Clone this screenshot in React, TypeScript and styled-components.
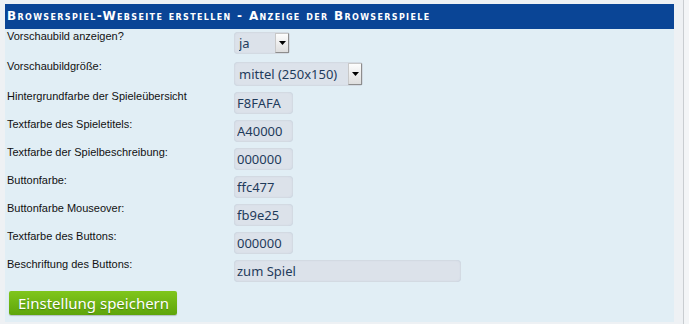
import React from "react";
import styled, { createGlobalStyle } from "styled-components";

const Global = createGlobalStyle`
  html, body { margin: 0; padding: 0; }
  body { background: #f3f5f7; font-family: "Liberation Sans", Arial, sans-serif; }
`;

const Frame = styled.div`
  width: 684px;
  height: 324px;
  box-sizing: border-box;
  padding: 4px 10px 2px 5px;
  background: #eef1f4;
  border-right: 1px solid #c9cdd1;
`;

const Panel = styled.div`
  background: #e1eef5;
  width: 669px;
  height: 318px;
  display: flex;
  flex-direction: column;
`;

const Header = styled.div`
  height: 25px;
  background: #0a4596;
  color: #fff;
  font-family: "DejaVu Sans", Verdana, sans-serif;
  font-weight: bold;
  font-variant: small-caps;
  font-size: 12px;
  line-height: 25px;
  padding-left: 2px;
  letter-spacing: 1.35px;
  white-space: nowrap;
`;

const Form = styled.form`
  display: flex;
  flex-direction: column;
  padding: 1px 0 0 2px;
  margin: 0;
`;

const Row = styled.div<{ $h: number }>`
  display: grid;
  grid-template-columns: 227px 1fr;
  height: ${(p) => p.$h}px;
  align-items: start;
`;

const Label = styled.label`
  font-family: "Liberation Sans", Arial, sans-serif;
  font-size: 11px;
  line-height: 13px;
  color: #111;
`;

const Field = styled.input<{ $w: number }>`
  margin-top: 2px;
  width: ${(p) => p.$w}px;
  height: 22px;
  box-sizing: border-box;
  border: none;
  border-radius: 4px;
  background: #dce2ea;
  box-shadow: inset 0 0 2px rgba(120, 140, 160, 0.35);
  font-family: "Noto Sans", "Open Sans", sans-serif;
  font-size: 13px;
  color: #1f3b5b;
  padding: 0 0 0 3px;
  outline: none;
`;

const SelectWrap = styled.div<{ $h: number }>`
  margin-top: 2px;
  display: inline-flex;
  align-items: center;
  height: ${(p) => p.$h}px;
  background: #dce2ea;
  border-radius: 4px;
  box-shadow: inset 0 0 2px rgba(120, 140, 160, 0.35);
  justify-self: start;
  padding-right: 1px;
`;

const Select = styled.select<{ $w: number }>`
  appearance: none;
  -webkit-appearance: none;
  border: none;
  background: transparent;
  width: ${(p) => p.$w}px;
  font-family: "Noto Sans", "Open Sans", sans-serif;
  font-size: 13px;
  color: #1f3b5b;
  padding: 0 0 0 5px;
  outline: none;
  height: 100%;
`;

const ArrowBox = styled.span<{ $h: number }>`
  width: 14px;
  height: ${(p) => p.$h}px;
  box-sizing: border-box;
  border: 1px solid #8d8d8d;
  border-left-color: #c8c8c8;
  border-top-color: #c8c8c8;
  background: linear-gradient(#fdfdfd, #dedede);
  display: flex;
  align-items: center;
  justify-content: center;
`;

const SaveButton = styled.button`
  margin: 5px 0 0 2px;
  align-self: flex-start;
  height: 24px;
  padding: 0 8px 0 9px;
  border: none;
  border-radius: 2px;
  background: linear-gradient(#80c61c, #5ea50b);
  color: #fff;
  font-family: "Noto Sans", "Open Sans", sans-serif;
  font-size: 15px;
  line-height: 24px;
  text-shadow: 0 1px 1px rgba(40, 80, 0, 0.45);
  box-shadow: 0 1px 1px rgba(0, 0, 0, 0.2);
  cursor: pointer;
`;

const Arrow = ({ h }: { h: number }) => (
  <ArrowBox $h={h}>
    <svg width="7" height="4" viewBox="0 0 7 4">
      <polygon points="0,0 7,0 3.5,4" fill="#000" />
    </svg>
  </ArrowBox>
);

const fields: { label: string; value: string; w: number }[] = [
  { label: "Hintergrundfarbe der Spieleübersicht", value: "F8FAFA", w: 59 },
  { label: "Textfarbe des Spieletitels:", value: "A40000", w: 59 },
  { label: "Textfarbe der Spielbeschreibung:", value: "000000", w: 59 },
  { label: "Buttonfarbe:", value: "ffc477", w: 59 },
  { label: "Buttonfarbe Mouseover:", value: "fb9e25", w: 59 },
  { label: "Textfarbe des Buttons:", value: "000000", w: 59 },
  { label: "Beschriftung des Buttons:", value: "zum Spiel", w: 227 },
];

export default function App() {
  return (
    <>
      <Global />
      <Frame>
        <Panel>
          <Header>Browserspiel-Webseite erstellen - Anzeige der Browserspiele</Header>
          <Form onSubmit={(e) => e.preventDefault()}>
            <Row $h={30}>
              <Label>Vorschaubild anzeigen?</Label>
              <SelectWrap $h={22}>
                <Select $w={41} defaultValue="ja">
                  <option value="ja">ja</option>
                  <option value="nein">nein</option>
                </Select>
                <Arrow h={20} />
              </SelectWrap>
            </Row>
            <Row $h={30}>
              <Label>Vorschaubildgröße:</Label>
              <SelectWrap $h={24}>
                <Select $w={114} defaultValue="m">
                  <option value="m">mittel (250x150)</option>
                </Select>
                <Arrow h={22} />
              </SelectWrap>
            </Row>
            {fields.map((f) => (
              <Row $h={28} key={f.label}>
                <Label>{f.label}</Label>
                <Field $w={f.w} defaultValue={f.value} />
              </Row>
            ))}
            <SaveButton type="submit">Einstellung speichern</SaveButton>
          </Form>
        </Panel>
      </Frame>
    </>
  );
}
